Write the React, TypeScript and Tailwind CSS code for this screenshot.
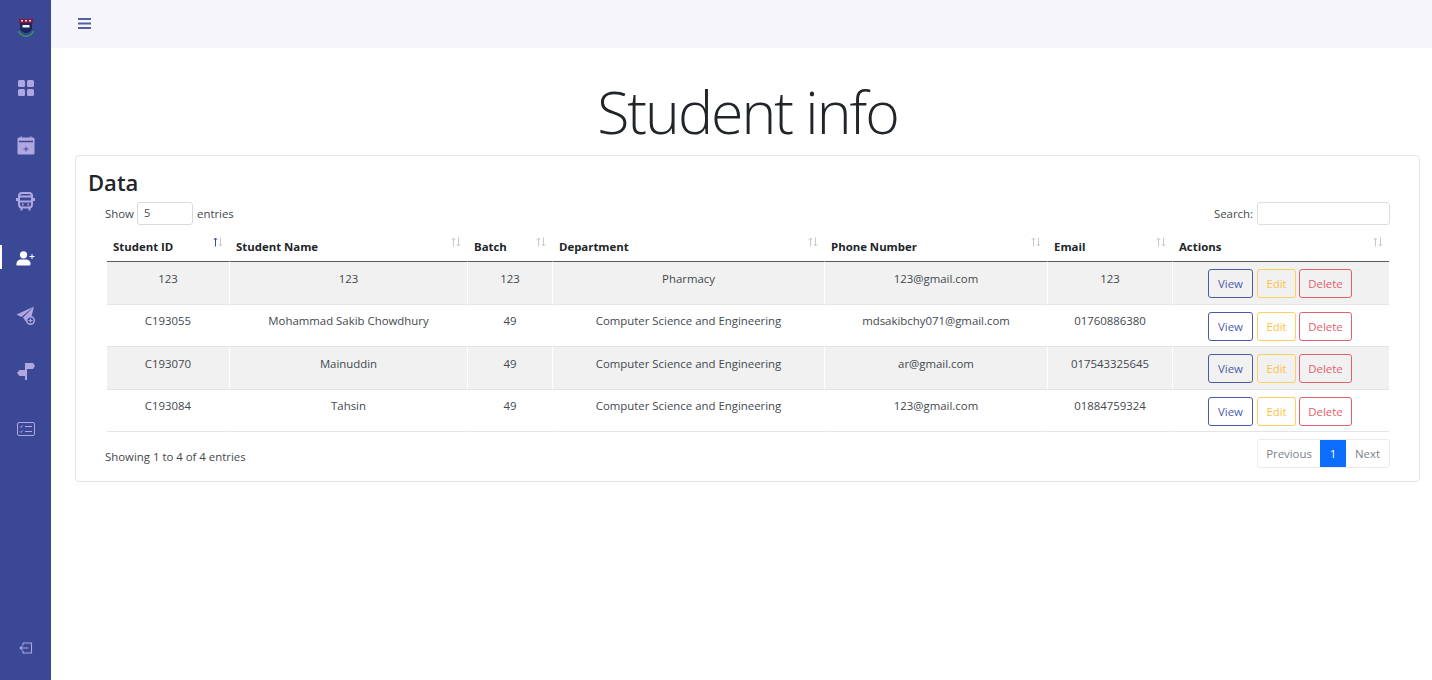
import React from "react";

const rows = [
  { id: "123", name: "123", batch: "123", dept: "Pharmacy", email: "123@gmail.com", phone: "123" },
  { id: "C193055", name: "Mohammad Sakib Chowdhury", batch: "49", dept: "Computer Science and Engineering", email: "mdsakibchy071@gmail.com", phone: "01760886380" },
  { id: "C193070", name: "Mainuddin", batch: "49", dept: "Computer Science and Engineering", email: "ar@gmail.com", phone: "017543325645" },
  { id: "C193084", name: "Tahsin", batch: "49", dept: "Computer Science and Engineering", email: "123@gmail.com", phone: "01884759324" },
];

const heads = [
  { label: "Student ID", w: "w-[123px]" },
  { label: "Student Name", w: "w-[238px]" },
  { label: "Batch", w: "w-[85px]" },
  { label: "Department", w: "w-[272px]" },
  { label: "Phone Number", w: "w-[223px]" },
  { label: "Email", w: "w-[125px]" },
  { label: "Actions", w: "w-[216px]" },
];

const SortIcon = ({ active }: { active?: boolean }) => (
  <svg width="12" height="10" viewBox="0 0 12 10" fill="none" strokeWidth="1" className="absolute right-[5px] top-[12px]">
    <path d="M3.500 9.500V1M1.800 2.800 3.500 1l1.700 1.800" stroke={active ? "#3b4a9a" : "#c9c9c9"} />
    <path d="M8.500 .5V9M6.800 7.200 8.500 9l1.700-1.800" stroke="#c9c9c9" />
  </svg>
);

const Logo = () => (
  <svg width="16" height="18" viewBox="0 0 16 18">
    <path d="M1 0h14v4H1z" fill="#8e1436" />
    <path d="M2 4h12v5c0 2.500-2.500 4.500-6 5.500C4.500 13.500 2 11.500 2 9z" fill="#1d2560" />
    <rect x="4.500" y="6" width="7" height="2.500" fill="#f2f2f2" />
    <path d="M.5 12c1 3 4.500 5.200 7.500 5.200s6.500-2.200 7.500-5.200" stroke="#2e9e5b" strokeWidth="1.400" fill="none" />
    <path d="M3 1.800h2M7 1.800h2M11 1.800h2" stroke="#f4d9de" strokeWidth="1.400" />
  </svg>
);

const c = "#b0a6e0";

const SideIcons = {
  grid: (
    <svg width="18" height="18" viewBox="0 0 18 18" fill={c}>
      <rect x="1" y="1" width="7" height="7" rx="1.500" />
      <rect x="10" y="1" width="7" height="7" rx="1.500" />
      <rect x="1" y="10" width="7" height="7" rx="1.500" />
      <rect x="10" y="10" width="7" height="7" rx="1.500" />
    </svg>
  ),
  calendar: (
    <svg width="18" height="19" viewBox="0 0 18 19">
      <path d="M3.500 .5h1.500V1.500h8V.5h1.500v1H16a1.500 1.500 0 0 1 1.500 1.500v14A1.500 1.500 0 0 1 16 18.500H2A1.500 1.500 0 0 1 .5 17V3a1.500 1.500 0 0 1 1.500-1.500h1.500z" fill={c} />
      <path d="M2 5.500h14" stroke="#3a4896" strokeWidth="1.500" />
      <path d="M9 10.500v5M6.500 13h5" stroke="#3a4896" strokeWidth=".9" />
    </svg>
  ),
  bus: (
    <svg width="19" height="19" viewBox="0 0 19 19" fill="none" stroke={c} strokeWidth="2">
      <rect x="3" y="1" width="13" height="14.500" rx="3" />
      <path d="M3 9.500h13M5.500 15.500v3M13.500 15.500v3M1 6v3M18 6v3M3 4.500h13" />
      <path d="M6 12.500h1.500M11.500 12.500H13" />
    </svg>
  ),
  userPlus: (
    <svg width="19" height="15" viewBox="0 0 19 15" fill="#fff">
      <circle cx="7.500" cy="3.800" r="3.600" />
      <path d="M.5 14.500c-.6-4.500 2.500-6 4.500-6h5c2 0 5 1.500 4.500 4.500-.1 1-.8 1.500-1.500 1.500z" />
      <path d="M16 3v5M13.500 5.500h5" stroke="#fff" strokeWidth="1" />
    </svg>
  ),
  plane: (
    <svg width="19" height="19" viewBox="0 0 19 19">
      <path d="M18 .5 .5 8.500l5 2.500z" fill={c} />
      <path d="M18 .5 7 11.500l3.500 5 2-2.500c.5-2 1.500-3 3-3.500z" fill={c} />
      <circle cx="14.500" cy="14.500" r="3.800" fill="#3a4896" stroke={c} strokeWidth="1.500" />
      <path d="M14.500 12.500v4M12.500 14.500h4" stroke={c} strokeWidth="1.200" />
    </svg>
  ),
  sign: (
    <svg width="18" height="17" viewBox="0 0 18 17" fill={c}>
      <path d="M8 0h2v17H8z" />
      <path d="M9 0h7l2 3-2 3H9z" />
      <path d="M9 7H2.500L0 10l2.500 3H9z" />
    </svg>
  ),
  card: (
    <svg width="18" height="14" viewBox="0 0 18 14" fill="none" stroke={c}>
      <rect x=".5" y=".5" width="17" height="13" rx="1.500" />
      <path d="M8 4.500h7M8 9.500h7" />
      <path d="M3 4.500l1 1 1.500-2M3 9.500l1 1 1.500-2" />
    </svg>
  ),
  logout: (
    <svg width="14" height="12" viewBox="0 0 14 12" fill="none" stroke={c} strokeWidth="1.100">
      <path d="M4 1h8.500v10H4V8.500M4 3.500V1" />
      <path d="M9 6H1M3.200 3.800 1 6l2.200 2.200" />
    </svg>
  ),
};

const btnBase = "inline-flex h-[29px] items-center justify-center rounded-[3px] border bg-transparent";

export default function App() {
  return (
    <div className="flex h-[680px] w-[1432px] overflow-hidden bg-white font-['Open_Sans','Noto_Sans',sans-serif] text-[11.4px] text-[#43484e]">
      <aside className="flex w-[51px] shrink-0 flex-col items-center bg-[#3a4896]">
        <div className="mt-[19px] flex h-[18px] items-center">
          <Logo />
        </div>
        <nav className="mt-[42px] flex w-full flex-col items-center">
          <div className="flex h-[18px] items-center">{SideIcons.grid}</div>
          <div className="mt-[39px] flex h-[19px] items-center">{SideIcons.calendar}</div>
          <div className="mt-[37px] flex h-[19px] items-center">{SideIcons.bus}</div>
          <div className="relative mt-[40px] flex h-[15px] w-full items-center justify-center">
            <span className="absolute left-0 top-[-6px] h-6 w-[2px] bg-white" />
            {SideIcons.userPlus}
          </div>
          <div className="mt-[40px] flex h-[19px] items-center">{SideIcons.plane}</div>
          <div className="mt-[38px] flex h-[17px] items-center">{SideIcons.sign}</div>
          <div className="mt-[42px] flex h-[14px] items-center">{SideIcons.card}</div>
        </nav>
        <div className="mt-auto mb-[26px] flex items-center">{SideIcons.logout}</div>
      </aside>

      <main className="flex min-w-0 flex-1 flex-col">
        <header className="flex h-12 items-center bg-[#f5f5fb] pb-[1px] pl-[27px]">
          <svg width="13" height="11" viewBox="0 0 13 11" stroke="#55619f" strokeWidth="1.800">
            <path d="M0 1h13M0 5.500h13M0 10h13" />
          </svg>
        </header>

        <h1 className="mt-[21px] mr-3 ml-6 h-[86px] text-center text-[59px] leading-[84px] font-light tracking-[-2px] text-[#212529]">Student info</h1>

        <section className="mr-3 ml-6 h-[327px] rounded-[4px] border border-[#e3e4e6] px-3 pt-3">
          <h3 className="text-[22px] leading-[29px] font-semibold text-[#212529]">Data</h3>

          <div className="mt-[5px] flex items-center justify-between pr-[17px] pl-[17px]">
            <div className="flex items-center">
              <span className="w-8">Show</span>
              <div className="flex h-[23px] w-14 items-center rounded-[3px] border border-[#d8dbde] pl-[6px] text-[11px]">5</div>
              <span className="ml-1">entries</span>
            </div>
            <div className="flex items-center gap-1">
              <span>Search:</span>
              <div className="h-[23px] w-[133px] rounded-[3px] border border-[#dcdfe2]" />
            </div>
          </div>

          <table className="ml-[19px] w-[1282px] table-fixed border-separate border-spacing-0">
            <thead>
              <tr>
                {heads.map((h, i) => (
                  <th
                    key={h.label}
                    className={`${h.w} relative h-[37px] border-b border-[#55585c] pt-[7px] pl-[6px] text-left font-bold text-[#212529] ${i < 6 ? "border-r border-r-white" : ""}`}
                  >
                    {h.label}
                    <SortIcon active={i === 0} />
                  </th>
                ))}
              </tr>
            </thead>
            <tbody>
              {rows.map((r, i) => {
                const bg = i % 2 === 0 ? "bg-[#f1f1f1]" : "";
                const cell = `h-[42.500px] border-b border-b-[#e3e4e6] border-r border-r-white pb-[9px] text-center align-middle ${bg}`;
                return (
                  <tr key={r.id}>
                    <td className={cell}>{r.id}</td>
                    <td className={cell}>{r.name}</td>
                    <td className={cell}>{r.batch}</td>
                    <td className={cell}>{r.dept}</td>
                    <td className={cell}>{r.email}</td>
                    <td className={cell}>{r.phone}</td>
                    <td className={`h-[42.500px] border-b border-b-[#e3e4e6] pt-[2px] text-center align-middle ${bg}`}>
                      <div className="flex justify-center pr-[2px]">
                        <span className={`${btnBase} mr-1 w-[45px] border-[#4a5aa8] text-[#4a5aa8]`}>View</span>
                        <span className={`${btnBase} mr-[3px] w-[39px] border-[#ffd15c] text-[#ffc340]`}>Edit</span>
                        <span className={`${btnBase} w-[53px] border-[#e2606e] text-[#e2606e]`}>Delete</span>
                      </div>
                    </td>
                  </tr>
                );
              })}
            </tbody>
          </table>

          <div className="mt-[7px] flex items-start justify-between pr-[17px] pl-[17px]">
            <span className="mt-[9px]">Showing 1 to 4 of 4 entries</span>
            <div className="flex h-[29px] items-center overflow-hidden rounded-[3px] border border-[#e9ebee] text-[#7b8188]">
              <span className="flex h-full w-[62px] items-center justify-center">Previous</span>
              <span className="flex h-[29px] w-[26px] items-center justify-center bg-[#0d6efd] text-white">1</span>
              <span className="flex h-full w-[43px] items-center justify-center">Next</span>
            </div>
          </div>
        </section>
      </main>
    </div>
  );
}
